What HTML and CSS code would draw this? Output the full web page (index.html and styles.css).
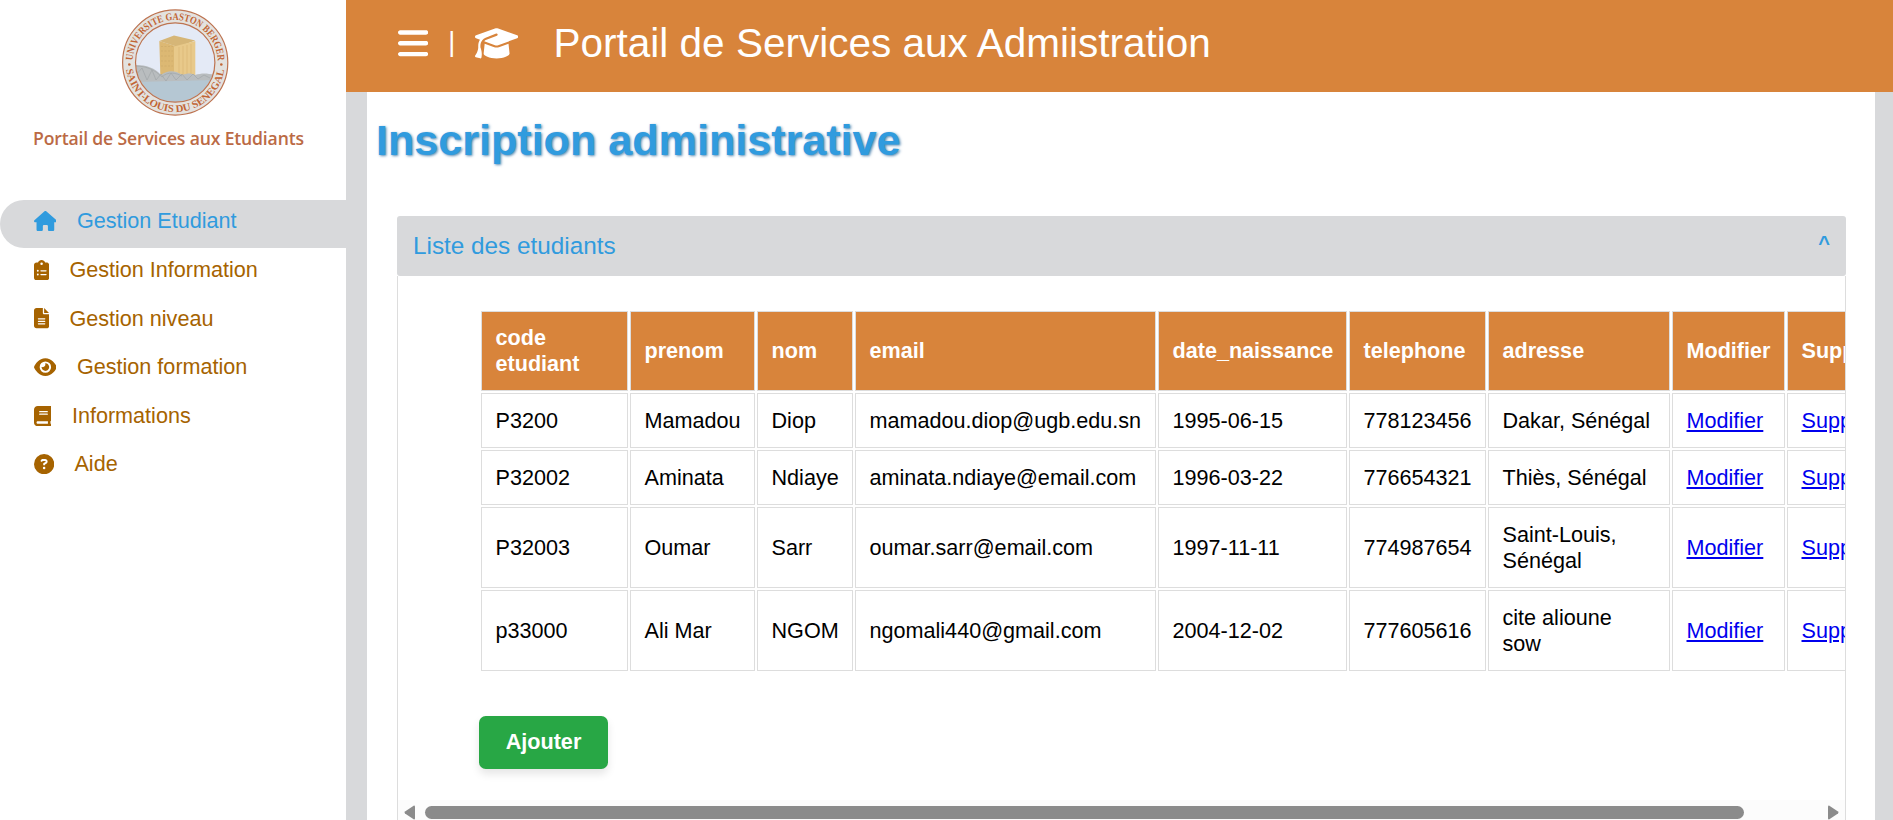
FILE: index.html
```html
<!DOCTYPE html>
<html lang="fr">
<head>
<meta charset="utf-8">
<title>Portail de Services</title>
<link rel="stylesheet" href="styles.css">
</head>
<body>
<aside class="sidebar">
  <svg class="logo" viewBox="0 0 346 160" width="346" height="160">
    <defs>
      <path id="arc-top" d="M132.600 62.500a42.600 42.600 0 0 1 85.200 0"/>
      <path id="arc-bottom" d="M125.700 62.500a49.500 49.500 0 0 0 99 0"/>
      <clipPath id="seal"><circle cx="175.200" cy="62.500" r="39.500"/></clipPath>
    </defs>
    <circle cx="175.200" cy="62.500" r="52.600" fill="#e3e2df" stroke="#bd7350" stroke-width="1.200"/>
    <g clip-path="url(#seal)">
      <rect x="130" y="20" width="90" height="62" fill="#e4eaf6"/>
      <rect x="130" y="79.500" width="90" height="30" fill="#b5c7d3"/>
      <path d="M159.300 41 174 35.600l21.300 5L178 47z" fill="#d6b677"/>
      <path d="M159.300 41 177 46.500v32l-16.500 2z" fill="#dcb873"/>
      <path d="M174 46.500 195.300 41v36l-21.300 2z" fill="#e8c98a"/>
      <path d="M161 46.500h12M161 51h12M161 56h12M161 61h12M161 66h12" stroke="#cda967" stroke-width=".7" stroke-dasharray="2 1.500"/>
      <path d="M179 47v30M183 46v31M187 45v32M191 44v33" stroke="#dcb977" stroke-width=".8"/>
      <path d="M135 65c12 0 20 3 26 10 7-6 16-4 21 0 6-2 9-2 13 0 7-2 11-2 20 0v5l-80 2z" fill="#b9bdbf"/>
      <path d="M135 76l7-8 5 12 5-10 4 10 5-6 5 7 5-8 5 7 6-6 5 6 6-6 5 5 6-4 6 3M135 66c12 0 20 4 27 11 6-6 14-4 20-1" fill="none" stroke="#a0a6a9" stroke-width=".7"/>
    </g>
    <circle cx="175.200" cy="62.500" r="39.700" fill="none" stroke="#bd7350" stroke-width="1.200"/>
    <text class="seal-text"><textPath href="#arc-top" startOffset="2" textLength="130" lengthAdjust="spacingAndGlyphs">UNIVERSITE GASTON BERGER</textPath></text>
    <text class="seal-text"><textPath href="#arc-bottom" startOffset="7" textLength="141" lengthAdjust="spacingAndGlyphs">SAINT-LOUIS DU SENEGAL</textPath></text>
    <circle cx="129.300" cy="64.500" r="1.300" fill="#c16535"/>
    <circle cx="221.300" cy="64.500" r="1.300" fill="#c16535"/>
    <text class="logo-caption" x="33" y="144.700" textLength="271">Portail de Services aux Etudiants</text>
  </svg>
  <nav class="menu">
    <a class="item active"><svg width="22.780" height="20.250" viewBox="0 0 576 512"><path d="M575.800 255.500c0 18-15 32.100-32 32.100l-32 0 .7 160.200c0 2.700-.2 5.400-.5 8.100l0 16.200c0 22.100-17.900 40-40 40l-16 0c-1.100 0-2.200 0-3.300-.1c-1.400 .1-2.800 .1-4.200 .1L416 512l-24 0c-22.100 0-40-17.900-40-40l0-24 0-64c0-17.700-14.300-32-32-32l-64 0c-17.700 0-32 14.300-32 32l0 64 0 24c0 22.100-17.900 40-40 40l-24 0-31.900 0c-1.500 0-3-.1-4.500-.2c-1.200 .1-2.400 .2-3.600 .2l-16 0c-22.100 0-40-17.900-40-40l0-112c0-.9 0-1.900 .1-2.800l0-69.700-32 0c-18 0-32-14-32-32.100c0-9 3-17 10-24L266.400 8c7-7 15-8 22-8s15 2 21 7L564.800 231.500c8 7 12 15 11 24z"/></svg><span>Gestion Etudiant</span></a>
    <a class="item"><svg width="15.190" height="20.250" viewBox="0 0 384 512"><path fill-rule="evenodd" d="M192 0c-41.800 0-77.400 26.700-90.500 64L64 64C28.700 64 0 92.700 0 128L0 448c0 35.300 28.700 64 64 64l256 0c35.300 0 64-28.700 64-64l0-320c0-35.300-28.700-64-64-64l-37.500 0C269.400 26.700 233.800 0 192 0zm0 64a32 32 0 1 1 0 64 32 32 0 1 1 0-64zM72 272a24 24 0 1 1 48 0 24 24 0 1 1-48 0zm104-16l128 0c8.800 0 16 7.200 16 16s-7.200 16-16 16l-128 0c-8.800 0-16-7.200-16-16s7.200-16 16-16zM72 368a24 24 0 1 1 48 0 24 24 0 1 1-48 0zm88 0c0-8.800 7.200-16 16-16l128 0c8.800 0 16 7.200 16 16s-7.200 16-16 16l-128 0c-8.800 0-16-7.200-16-16z"/></svg><span>Gestion Information</span></a>
    <a class="item"><svg width="15.190" height="20.250" viewBox="0 0 384 512"><path fill-rule="evenodd" d="M64 0C28.700 0 0 28.700 0 64L0 448c0 35.300 28.700 64 64 64l256 0c35.300 0 64-28.700 64-64l0-288-128 0c-17.700 0-32-14.300-32-32L224 0 64 0zM256 0l0 128 128 0L256 0zM112 256l160 0c8.800 0 16 7.200 16 16s-7.200 16-16 16l-160 0c-8.800 0-16-7.200-16-16s7.200-16 16-16zm0 64l160 0c8.800 0 16 7.200 16 16s-7.200 16-16 16l-160 0c-8.800 0-16-7.200-16-16s7.200-16 16-16zm0 64l160 0c8.800 0 16 7.200 16 16s-7.200 16-16 16l-160 0c-8.800 0-16-7.200-16-16s7.200-16 16-16z"/></svg><span>Gestion niveau</span></a>
    <a class="item"><svg width="22.780" height="20.250" viewBox="0 0 576 512"><path fill-rule="evenodd" d="M288 32c-80.800 0-145.500 36.800-192.600 80.600C48.600 156 17.300 208 2.500 243.700c-3.300 7.900-3.300 16.700 0 24.600C17.300 304 48.600 356 95.400 399.400C142.500 443.200 207.200 480 288 480s145.500-36.800 192.600-80.600c46.800-43.500 78.100-95.400 93-131.100c3.300-7.900 3.300-16.700 0-24.600c-14.900-35.700-46.200-87.700-93-131.100C433.500 68.800 368.800 32 288 32zM144 256a144 144 0 1 1 288 0 144 144 0 1 1-288 0zm144-64c0 35.300-28.700 64-64 64c-7.100 0-13.900-1.200-20.300-3.300c-5.500-1.800-11.900 1.600-11.700 7.400c.3 6.900 1.300 13.800 3.200 20.700c13.700 51.200 66.400 81.600 117.600 67.900s81.600-66.400 67.900-117.600c-11.100-41.500-47.800-69.400-88.600-71.100c-5.800-.2-9.200 6.100-7.400 11.700c2.100 6.400 3.300 13.200 3.300 20.300z"/></svg><span>Gestion formation</span></a>
    <a class="item"><svg width="17.720" height="20.250" viewBox="0 0 448 512"><path fill-rule="evenodd" d="M96 0C43 0 0 43 0 96L0 416c0 53 43 96 96 96l288 0 32 0c17.700 0 32-14.300 32-32s-14.300-32-32-32l0-64c17.700 0 32-14.300 32-32l0-320c0-17.700-14.300-32-32-32L384 0 96 0zm0 384l256 0 0 64L96 448c-17.700 0-32-14.300-32-32s14.300-32 32-32zm32-240c0-8.800 7.200-16 16-16l192 0c8.800 0 16 7.200 16 16s-7.200 16-16 16l-192 0c-8.800 0-16-7.200-16-16zm16 48l192 0c8.800 0 16 7.200 16 16s-7.200 16-16 16l-192 0c-8.800 0-16-7.200-16-16s7.200-16 16-16z"/></svg><span>Informations</span></a>
    <a class="item"><svg width="20.250" height="20.250" viewBox="0 0 512 512"><path fill-rule="evenodd" d="M256 512A256 256 0 1 0 256 0a256 256 0 1 0 0 512zM169.800 165.300c7.900-22.300 29.100-37.300 52.800-37.300l58.300 0c34.900 0 63.100 28.300 63.100 63.100c0 22.600-12.100 43.500-31.700 54.800L280 264.400c-.2 13-10.900 23.600-24 23.600c-13.300 0-24-10.700-24-24l0-13.500c0-8.600 4.600-16.500 12.100-20.800l44.300-25.400c4.700-2.700 7.600-7.700 7.600-13.100c0-8.400-6.800-15.100-15.100-15.100l-58.300 0c-3.400 0-6.400 2.100-7.500 5.300l-.4 1.200c-4.400 12.500-18.200 19-30.600 14.600s-19-18.200-14.600-30.600l.4-1.200zM224 352a32 32 0 1 1 64 0 32 32 0 1 1-64 0z"/></svg><span>Aide</span></a>
  </nav>
</aside>
<div class="page">
  <header class="topbar">
    <svg class="bars" width="30.240" height="34.560" viewBox="0 0 448 512"><path d="M0 96C0 78.300 14.300 64 32 64l384 0c17.700 0 32 14.300 32 32s-14.300 32-32 32L32 128C14.300 128 0 113.700 0 96zM0 256c0-17.700 14.300-32 32-32l384 0c17.700 0 32 14.300 32 32s-14.300 32-32 32L32 288c-17.700 0-32-14.300-32-32zM448 416c0 17.700-14.300 32-32 32L32 448c-17.700 0-32-14.300-32-32s14.300-32 32-32l384 0c17.700 0 32 14.300 32 32z"/></svg>
    <span class="pipe">|</span>
    <svg class="cap" width="43.200" height="34.560" viewBox="0 0 640 512"><path d="M320 32c-8.100 0-16.100 1.400-23.700 4.100L15.800 137.400C6.300 140.900 0 149.900 0 160s6.300 19.100 15.800 22.600l57.900 20.900C57.300 229.300 48 259.800 48 291.900l0 28.100c0 28.400-10.800 57.700-22.300 80.800c-6.500 13-13.900 25.800-22.500 37.600C0 442.700-.9 448.300 .9 453.400s6 8.900 11.200 10.200l64 16c4.200 1.100 8.700 .3 12.400-2s6.300-6.100 7.100-10.400c8.600-42.800 4.300-81.200-2.100-108.700C90.300 344.300 86 329.800 80 316.500l0-24.600c0-30.200 10.200-58.700 27.900-81.500c12.900-15.500 29.600-28 49.200-35.700l157-61.700c8.200-3.200 17.500 .8 20.700 9s-.8 17.500-9 20.700l-157 61.700c-12.400 4.900-23.300 12.400-32.200 21.600l159.600 57.600c7.600 2.700 15.600 4.100 23.700 4.100s16.100-1.400 23.700-4.100L624.200 182.600c9.500-3.400 15.800-12.500 15.800-22.600s-6.300-19.100-15.800-22.600L343.700 36.100C336.100 33.400 328.100 32 320 32zM128 408c0 35.300 86 72 192 72s192-36.700 192-72L496.700 262.600 354.500 314c-11.100 4-22.800 6-34.500 6s-23.500-2-34.500-6L143.300 262.600 128 408z"/></svg>
    <span class="brand">Portail de Services aux Admiistration</span>
  </header>
  <main class="content">
    <h1 class="title">Inscription administrative</h1>
    <section class="card">
      <div class="card-head"><span>Liste des etudiants</span><span class="caret">^</span></div>
      <div class="card-body">
        <div class="viewport">
          <table class="students">
            <colgroup><col class="c1"><col class="c2"><col class="c3"><col class="c4"><col class="c5"><col class="c6"><col class="c7"><col class="c8"><col class="c9"></colgroup>
            <tr><th>code etudiant</th><th>prenom</th><th>nom</th><th>email</th><th>date_naissance</th><th>telephone</th><th>adresse</th><th>Modifier</th><th>Supprimer</th></tr>
            <tr><td>P3200</td><td>Mamadou</td><td>Diop</td><td>mamadou.diop@ugb.edu.sn</td><td>1995-06-15</td><td>778123456</td><td>Dakar, Sénégal</td><td><a href="#">Modifier</a></td><td><a href="#">Supprimer</a></td></tr>
            <tr><td>P32002</td><td>Aminata</td><td>Ndiaye</td><td>aminata.ndiaye@email.com</td><td>1996-03-22</td><td>776654321</td><td>Thiès, Sénégal</td><td><a href="#">Modifier</a></td><td><a href="#">Supprimer</a></td></tr>
            <tr><td>P32003</td><td>Oumar</td><td>Sarr</td><td>oumar.sarr@email.com</td><td>1997-11-11</td><td>774987654</td><td>Saint-Louis, Sénégal</td><td><a href="#">Modifier</a></td><td><a href="#">Supprimer</a></td></tr>
            <tr><td>p33000</td><td>Ali Mar</td><td>NGOM</td><td>ngomali440@gmail.com</td><td>2004-12-02</td><td>777605616</td><td>cite alioune<br>sow</td><td><a href="#">Modifier</a></td><td><a href="#">Supprimer</a></td></tr>
          </table>
          <button class="add">Ajouter</button>
        </div>
        <div class="scrollbar">
          <svg width="11" height="15" viewBox="0 0 11 15"><path d="M10 .5q1 0 1 1v12q0 1-1 1L1 8.500q-1-1 0-2z"/></svg>
          <div class="track"><div class="thumb"></div></div>
          <svg width="11" height="15" viewBox="0 0 11 15"><path d="M1 .5q-1 0-1 1v12q0 1 1 1l9-6q1-1 0-2z"/></svg>
        </div>
      </div>
    </section>
  </main>
</div>
</body>
</html>
```
FILE: styles.css
```css
* { box-sizing: border-box; }
body {
  margin: 0;
  height: 820px;
  display: flex;
  overflow: hidden;
  background: #d8d9db;
  font-family: "Liberation Sans", Arial, sans-serif;
  font-size: 21.6px;
  color: #000;
}
.sidebar { width: 346px; flex: none; background: #fff; }
.logo { display: block; }
.seal-text { font: bold 10.4px "Liberation Serif", serif; fill: #c16535; }
.logo-caption { font: 600 17.6px "Open Sans", sans-serif; fill: #bb6a45; }
.menu { padding-top: 40px; }
.item {
  display: flex;
  align-items: center;
  gap: 20.6px;
  height: 48.6px;
  padding: 0 0 5.8px 33.6px;
  color: #a66300;
  fill: currentColor;
}
.item.active {
  height: 48px;
  margin-bottom: .6px;
  background: #d8d9db;
  border-radius: 24px 0 0 24px;
  color: #309bde;
}
.page { flex: 1; min-width: 0; display: flex; flex-direction: column; }
.topbar {
  height: 92px;
  flex: none;
  display: flex;
  align-items: center;
  padding: 0 0 5px 52px;
  background: #d8843b;
  color: #fff;
  fill: #fff;
}
.pipe { margin-left: 20px; padding-bottom: 2px; font-size: 27px; }
.cap { margin-left: 19.6px; }
.brand { margin-left: 35.5px; font-size: 40.5px; }
.content {
  flex: 1;
  margin: 0 18px 0 21px;
  padding: 24px 29px 0 30px;
  background: #fff;
}
.title {
  margin: 0 0 51px -21px;
  font-size: 43.2px;
  line-height: 49px;
  letter-spacing: -.04px;
  color: #309bde;
  text-shadow: 1.35px 1.35px 2.7px rgba(48, 110, 160, .8);
}
.card-head {
  height: 60px;
  display: flex;
  justify-content: space-between;
  align-items: center;
  padding: 0 16px;
  border-radius: 3px;
  background: #d8d9db;
  color: #309bde;
  font-size: 24.3px;
}
.caret { padding-bottom: 6px; font-size: 20px; font-weight: bold; }
.card-body { height: 560px; border: solid #ddd; border-width: 0 1px; }
.viewport { height: 525px; padding: 33px 0 0 81px; overflow: hidden; }
.students {
  width: 1460px;
  table-layout: fixed;
  border-collapse: separate;
  border-spacing: 2px;
}
.students th, .students td {
  padding: 13.5px 13px 13.5px 13.5px;
  border: 1px solid #ddd;
  text-align: left;
  line-height: 26px;
}
.students th { height: 80px; padding: 13px 13px 13px 13.5px; background: #d8843b; color: #fff; }
.students a { color: #00e; }
.c1 { width: 147px; }
.c2 { width: 125px; }
.c3 { width: 96px; }
.c4 { width: 301px; }
.c5 { width: 189px; }
.c6 { width: 137px; }
.c7 { width: 182px; }
.c8 { width: 113px; }
.c9 { width: 150px; }
.add {
  display: block;
  width: 129px;
  height: 53px;
  margin-top: 43px;
  padding: 0 0 2px;
  border: 0;
  border-radius: 6.75px;
  background: #28a745;
  color: #fff;
  font: bold 21.6px "Liberation Sans", Arial, sans-serif;
  box-shadow: 0 5px 8px rgba(0, 0, 0, .1);
}
.scrollbar {
  height: 24px;
  margin-top: -1px;
  display: flex;
  align-items: center;
  gap: 10px;
  padding: 0 6px;
  background: #fcfcfc;
  fill: #8b8b8b;
}
.track { flex: 1; }
.thumb { width: 1319px; height: 13px; border-radius: 7px; background: #8b8b8b; }
```
